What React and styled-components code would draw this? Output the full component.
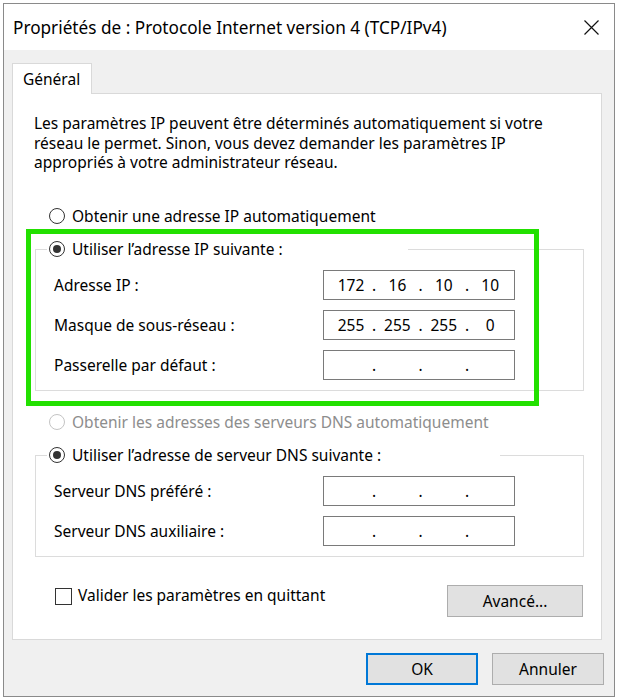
import React from 'react';
import styled, { createGlobalStyle } from 'styled-components';

const GlobalStyle = createGlobalStyle`
  html, body {
    margin: 0;
    padding: 0;
    background: #fff;
  }
  body {
    font-family: "Noto Sans", "Open Sans", sans-serif;
    font-size: 15.5px;
    color: #000;
  }
`;

const Page = styled.div`
  width: 619px;
  height: 700px;
  box-sizing: border-box;
  padding: 3px 0 0 3px;
  background: #fff;
`;

const Dialog = styled.div`
  width: 612px;
  height: 694px;
  box-sizing: border-box;
  border: 1px solid #8a8a8a;
  display: flex;
  flex-direction: column;
  background: #f0f0f0;
`;

const TitleBar = styled.div`
  height: 46px;
  flex-shrink: 0;
  background: #fff;
  display: flex;
  align-items: center;
  padding-left: 9px;
`;

const Title = styled.div`
  flex: 1;
  white-space: nowrap;
  font-size: 17.2px;
`;

const CloseButton = styled.div`
  width: 46px;
  height: 46px;
  display: flex;
  align-items: center;
  justify-content: center;
`;

const Body = styled.div`
  flex: 1;
  display: flex;
  flex-direction: column;
  padding: 13px 12px 0 8px;
`;

const TabStrip = styled.div`
  display: flex;
`;

const Tab = styled.div`
  width: 80px;
  height: 31px;
  box-sizing: border-box;
  border: 1px solid #d9d9d9;
  border-bottom: none;
  background: #fff;
  margin-bottom: -1px;
  position: relative;
  z-index: 1;
  display: flex;
  align-items: center;
  padding: 0 0 1px 10px;
`;

const Panel = styled.div`
  height: 547px;
  box-sizing: border-box;
  background: #fff;
  border: 1px solid #d9d9d9;
  padding: 0 17px 0 22px;
  display: flex;
  flex-direction: column;
`;

const Description = styled.p`
  margin: 20px 0 0 -1px;
  line-height: 19.5px;
`;

const OptionRow = styled.label`
  display: flex;
  align-items: center;
  height: 20px;
  margin: ${p => p.$top}px 0 0 14px;
  color: ${p => (p.$disabled ? '#8d8d8d' : '#000')};
  gap: 7px;
`;

const RadioCircle = styled.span`
  width: 16px;
  height: 16px;
  box-sizing: border-box;
  border-radius: 50%;
  border: 1px solid ${p => (p.$disabled ? '#c4c4c4' : '#333')};
  background: #fff;
  display: inline-flex;
  align-items: center;
  justify-content: center;
  flex-shrink: 0;

  &::after {
    content: '';
    width: 8px;
    height: 8px;
    border-radius: 50%;
    background: #333;
    display: ${p => (p.$checked ? 'block' : 'none')};
  }
`;

const GroupWrap = styled.div`
  position: relative;
  margin-top: 13px;
`;

const Group = styled.fieldset`
  margin: 0;
  padding: 11px 0 10px 0;
  border: 1px solid #dcdcdc;
  display: flex;
  flex-direction: column;
  gap: 10px;
`;

const GroupLegend = styled.legend`
  width: ${p => p.$width}px;
  box-sizing: border-box;
  margin-left: 11px;
  padding: 0 0 0 2px;
  height: 20px;
  display: flex;
  align-items: center;
  gap: 7px;
`;

const FieldRow = styled.div`
  display: grid;
  grid-template-columns: 1fr 192px;
  align-items: center;
  padding: 0 68px 0 18px;
`;

const IpBox = styled.div`
  width: 192px;
  height: 30px;
  box-sizing: border-box;
  border: 1px solid #7a7a7a;
  background: #fff;
  display: flex;
  align-items: center;
  padding-left: 9px;
`;

const Octet = styled.span`
  width: 36px;
  text-align: center;
`;

const Dot = styled.span`
  width: 10.4px;
  text-align: center;
`;

const Highlight = styled.div`
  position: absolute;
  left: -9px;
  top: -10px;
  width: 513px;
  height: 177px;
  box-sizing: border-box;
  border: 5px solid #22e000;
  pointer-events: none;
`;

const BottomRow = styled.div`
  display: flex;
  align-items: flex-start;
  justify-content: space-between;
  margin-top: 28px;
  padding-right: 1px;
`;

const CheckRow = styled.label`
  display: flex;
  align-items: center;
  height: 20px;
  margin-left: 20px;
  gap: 6px;
`;

const CheckBox = styled.span`
  width: 17px;
  height: 17px;
  box-sizing: border-box;
  border: 1px solid #333;
  background: #fff;
  margin-top: 2px;
`;

const Button = styled.button`
  width: ${p => p.$width}px;
  height: 32px;
  box-sizing: border-box;
  background: #e1e1e1;
  border: ${p => (p.$default ? '2px solid #0078d7' : '1px solid #adadad')};
  font: inherit;
  color: #000;
  padding: 0;
`;

const Footer = styled.div`
  display: flex;
  justify-content: flex-end;
  gap: 14px;
  padding-top: 13px;
  margin-right: -2px;
`;

const CloseIcon = () => (
  <svg width="15" height="15" viewBox="0 0 15 15">
    <path d="M0.5 0.5 L14.5 14.5 M14.5 0.5 L0.5 14.5" stroke="#111" strokeWidth="1.2" fill="none" />
  </svg>
);

const Radio = ({ checked, disabled, children, top }) => (
  <OptionRow $top={top} $disabled={disabled}>
    <RadioCircle $checked={checked} $disabled={disabled} />
    {children}
  </OptionRow>
);

const IpField = ({ value }) => {
  const parts = value || ['', '', '', ''];
  return (
    <IpBox>
      {parts.map((p, i) => (
        <React.Fragment key={i}>
          {i > 0 && <Dot>.</Dot>}
          <Octet>{p}</Octet>
        </React.Fragment>
      ))}
    </IpBox>
  );
};

const Field = ({ label, value }) => (
  <FieldRow>
    <span>{label}</span>
    <IpField value={value} />
  </FieldRow>
);

export default function App() {
  return (
    <>
      <GlobalStyle />
      <Page>
        <Dialog>
          <TitleBar>
            <Title>Propriétés de : Protocole Internet version 4 (TCP/IPv4)</Title>
            <CloseButton>
              <CloseIcon />
            </CloseButton>
          </TitleBar>
          <Body>
            <TabStrip>
              <Tab>Général</Tab>
            </TabStrip>
            <Panel>
              <Description>
                Les paramètres IP peuvent être déterminés automatiquement si votre
                <br />
                réseau le permet. Sinon, vous devez demander les paramètres IP
                <br />
                appropriés à votre administrateur réseau.
              </Description>

              <Radio top={33.5}>Obtenir une adresse IP automatiquement</Radio>

              <GroupWrap>
                <Group>
                  <GroupLegend $width={361}>
                    <RadioCircle $checked />
                    Utiliser l’adresse IP suivante :
                  </GroupLegend>
                  <Field label="Adresse IP :" value={['172', '16', '10', '10']} />
                  <Field label="Masque de sous-réseau :" value={['255', '255', '255', '0']} />
                  <Field label="Passerelle par défaut :" />
                </Group>
                <Highlight />
              </GroupWrap>

              <Radio top={21} disabled>
                Obtenir les adresses des serveurs DNS automatiquement
              </Radio>

              <GroupWrap>
                <Group>
                  <GroupLegend $width={453}>
                    <RadioCircle $checked />
                    Utiliser l’adresse de serveur DNS suivante :
                  </GroupLegend>
                  <Field label="Serveur DNS préféré :" />
                  <Field label="Serveur DNS auxiliaire :" />
                </Group>
              </GroupWrap>

              <BottomRow>
                <CheckRow>
                  <CheckBox />
                  Valider les paramètres en quittant
                </CheckRow>
                <Button $width={136}>Avancé...</Button>
              </BottomRow>
            </Panel>
            <Footer>
              <Button $width={112} $default>
                OK
              </Button>
              <Button $width={112}>Annuler</Button>
            </Footer>
          </Body>
        </Dialog>
      </Page>
    </>
  );
}
